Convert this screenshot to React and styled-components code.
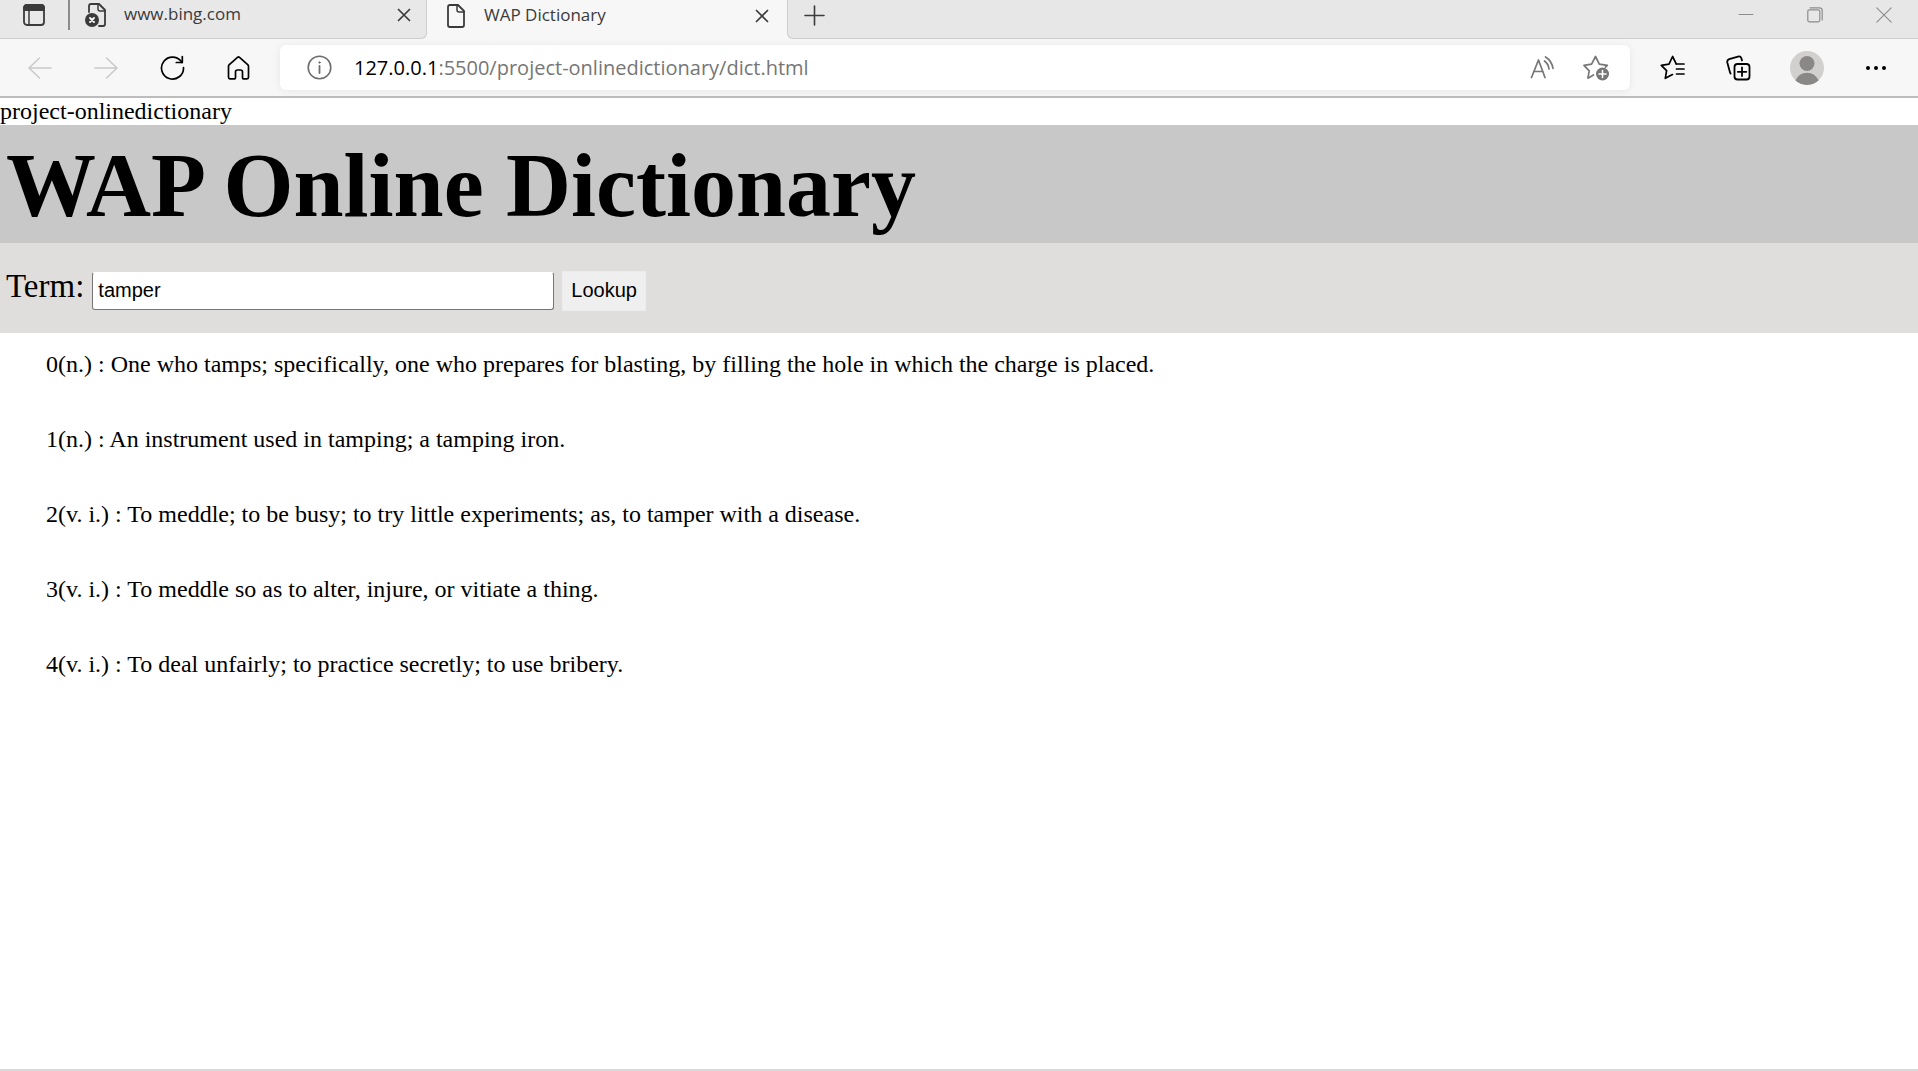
import React, { useState } from "react";
import styled, { createGlobalStyle } from "styled-components";

const GlobalStyle = createGlobalStyle`
  *, *::before, *::after { box-sizing: border-box; }
  body { margin: 0; background: #fff; }
`;

const uiFont = `"Open Sans", "Noto Sans", sans-serif`;
const serifFont = `"Liberation Serif", "Times New Roman", serif`;
const sansFont = `"Liberation Sans", Arial, sans-serif`;

const Window = styled.div`
  display: flex;
  flex-direction: column;
  min-height: 100vh;
  border-bottom: 2px solid #d9dad9;
`;

const TabStrip = styled.header`
  display: flex;
  height: 39px;
  background: #f7f7f7;
  font-family: ${uiFont};
`;

const StripStart = styled.div`
  display: flex;
  background: #e8e8e8;
  border: solid #cecece;
  border-width: 0 1px 1px 0;
  border-radius: 0 0 6px 0;
  padding-bottom: 8px;
`;

const StripEnd = styled.div`
  display: flex;
  flex: 1;
  justify-content: space-between;
  background: #e7e7e7;
  border: solid #cecece;
  border-width: 0 0 1px 1px;
  border-radius: 0 0 0 6px;
  padding-bottom: 8px;
`;

const PlainButton = styled.button`
  display: flex;
  align-items: center;
  justify-content: center;
  flex: none;
  border: 0;
  padding: 0;
  background: none;
  color: ${(p) => p.$color || "#000"};
  width: ${(p) => p.$width}px;
  svg { display: block; }
`;

const Divider = styled.span`
  width: 2px;
  background: #8c8c8c;
`;

const Tab = styled.div`
  display: flex;
  align-items: center;
  width: 356px;
  padding: 0 10px 0 15px;
  color: #3b3b3b;
  svg { display: block; flex: none; }
`;

const ActiveTab = styled(Tab)`
  width: 360px;
  padding: 0 13px 8px 18px;
`;

const TabTitle = styled.span`
  flex: 1;
  padding: 0 0 2px 18px;
  font-size: 17px;
  line-height: 24px;
  white-space: nowrap;
`;

const Controls = styled.div`
  display: flex;
`;

const Toolbar = styled.nav`
  display: flex;
  height: 59px;
  padding: 0 9px 0 7px;
  background: #f7f7f7;
  border-bottom: 2px solid #bdbdbd;
`;

const AddressBar = styled.div`
  display: flex;
  flex: 1;
  align-items: stretch;
  height: 45px;
  margin: 6px 9px;
  padding: 0 7px 0 4px;
  background: #fff;
  border-radius: 6px;
  box-shadow: 0 1px 8px rgba(0, 0, 0, 0.07);
  font-family: ${uiFont};
`;

const Address = styled.div`
  flex: 1;
  font-size: 20px;
  line-height: 45px;
  color: #767676;
  white-space: nowrap;
`;

const Host = styled.span`
  color: #000;
`;

const Page = styled.main`
  flex: 1;
  font-family: ${serifFont};
  font-size: 24px;
  line-height: 27px;
  color: #000;
`;

const Title = styled.h1`
  margin: 0;
  padding: 9px 6px 5px;
  background: #c8c8c8;
  font-size: 90px;
  line-height: 104px;
`;

const SearchForm = styled.form`
  display: flex;
  align-items: baseline;
  gap: 8px;
  padding: 24px 6px 22px;
  background: #dfdedc;
`;

const Label = styled.label`
  font-size: 33px;
  line-height: 38px;
`;

const TermInput = styled.input`
  width: 462px;
  height: 38px;
  border: 1px solid #767676;
  border-top-color: #fff;
  border-radius: 3px;
  padding: 0 5px;
  background: #fff;
  color: #000;
  font: 20px ${sansFont};
  outline: 0;
`;

const LookupButton = styled.button`
  height: 40px;
  border: 1px solid #ececec;
  padding: 0 8px;
  background: #efefef;
  color: #000;
  font: 20px ${sansFont};
`;

const Definitions = styled.div`
  display: flex;
  flex-direction: column;
  gap: 48px;
  padding: 18px 46px;
`;

const Definition = styled.p`
  margin: 0;
`;

const Icon = ({ w, h, sw = 2, children }) => (
  <svg
    width={w}
    height={h}
    viewBox={`0 0 ${w} ${h}`}
    fill="none"
    stroke="currentColor"
    strokeWidth={sw}
    strokeLinecap="round"
    strokeLinejoin="round"
    aria-hidden="true"
  >
    {children}
  </svg>
);

const TabActionsIcon = () => (
  <Icon w={22} h={22} sw={1.8}>
    <rect x="1" y="1" width="20" height="20" rx="3" />
    <path d="M1 6V4q0-3 3-3h14q3 0 3 3v2z" fill="currentColor" />
    <path d="M6 7v14" strokeWidth="1.5" />
  </Icon>
);

const BrokenPageIcon = () => (
  <Icon w={21} h={24} sw={1.8}>
    <path d="M4 9V3q0-2 2-2h8l6 6v14q0 2-2 2h-4" />
    <path d="M13 1v5q0 2 2 2h5" strokeWidth="1.5" />
    <circle cx="7" cy="17" r="7" fill="currentColor" stroke="none" />
    <path d="M5 15l4 4M9 15l-4 4" stroke="#fff" strokeWidth="1.8" />
  </Icon>
);

const PageIcon = () => (
  <Icon w={21} h={24} sw={1.8}>
    <path d="M13 1H5Q3 1 3 3v18q0 2 2 2h12q2 0 2-2V7z" />
    <path d="M12 1v5q0 2 2 2h5" strokeWidth="1.5" />
  </Icon>
);

const CloseIcon = () => (
  <Icon w={14} h={14} sw={1.7}>
    <path d="M1.5 1.5l11 11M12.5 1.5l-11 11" />
  </Icon>
);

const PlusIcon = () => (
  <Icon w={21} h={21} sw={1.6}>
    <path d="M10.5 1v19M1 10.5h19" />
  </Icon>
);

const MinimizeIcon = () => (
  <Icon w={16} h={16} sw={1}>
    <path d="M1 7.5h14" />
  </Icon>
);

const RestoreIcon = () => (
  <Icon w={16} h={16} sw={1.2}>
    <rect x="0.8" y="2.8" width="12" height="12" rx="1.5" />
    <path d="M3 0.8h9.500q2.700 0 2.700 2.700V13" />
  </Icon>
);

const WindowCloseIcon = () => (
  <Icon w={16} h={16} sw={1.1}>
    <path d="M0.8 0.8l14.400 14.400M15.200 0.8L0.8 15.200" />
  </Icon>
);

const BackIcon = () => (
  <Icon w={24} h={24} sw={1.6}>
    <path d="M23 12H1M11.5 2L1 12l10.500 10" />
  </Icon>
);

const ForwardIcon = () => (
  <Icon w={24} h={24} sw={1.6}>
    <path d="M1 12h22M12.500 2L23 12 12.500 22" />
  </Icon>
);

const ReloadIcon = () => (
  <Icon w={25} h={25} sw={1.7}>
    <path d="M22 7.500A11 11 0 1 0 23.500 12.500" />
    <path d="M22.300 1.500v6h-6" />
  </Icon>
);

const HomeIcon = () => (
  <Icon w={23} h={24} sw={1.7}>
    <path d="M1.500 10.300q0-1 .8-1.700L10.500 1.400q1-.8 2 0l8.200 7.200q.8.700.8 1.700V21.300q0 1.500-1.500 1.500h-3.500q-1 0-1-1V16q0-2-2-2h-3q-2 0-2 2v5.800q0 1-1 1H3q-1.500 0-1.500-1.500z" />
  </Icon>
);

const InfoIcon = () => (
  <Icon w={25} h={25} sw={1.6}>
    <circle cx="12.500" cy="12.500" r="11.300" />
    <path d="M12.500 11v7" strokeWidth="1.800" />
    <circle cx="12.500" cy="7.500" r="0.700" fill="currentColor" strokeWidth="1" />
  </Icon>
);

const ReadAloudIcon = () => (
  <Icon w={24} h={24} sw={1.7}>
    <path d="M1.500 21.500L8.500 4l6.500 17.500M3.800 15.500h9.200" />
    <path d="M14.500 5q4 3 4.500 8" />
    <path d="M15.500 1q6.500 4 7.500 11.500" />
  </Icon>
);

const AddFavoriteIcon = () => (
  <Icon w={26} h={26} sw={1.7}>
    <path d="M10.500 20l-5.600 3.200 1.300-7.400L1 10.300l7.600-1.200L12.500 1.500l3.800 7.600 8 1.200-1.800 1.900" />
    <circle cx="19.500" cy="19" r="6.500" fill="currentColor" stroke="none" />
    <path d="M19.500 15.500v7M16 19h7" stroke="#fff" strokeWidth="1.600" />
  </Icon>
);

const FavoritesIcon = () => (
  <Icon w={25} h={25} sw={1.7}>
    <path d="M12.500 19.600l-7.200 3.700 1.300-7.600L1.300 10.300l7.700-1.200 3.600-7.600 3.600 7.300" />
    <path d="M16.500 9h7.500M16.500 14h7.500M16.500 19h7.500" />
  </Icon>
);

const CollectionsIcon = () => (
  <Icon w={25} h={26} sw={1.8}>
    <path d="M4.600 18.500Q4.100 18 3.900 17L1.300 7.500Q.8 5 3.200 4.200L12 1.600q2.500-.7 3.400 1.700l.6 2.200" />
    <rect x="8.500" y="9" width="15" height="15.500" rx="3" />
    <path d="M16 12.500v8.500M11.800 16.800h8.500" />
  </Icon>
);

const AvatarIcon = () => (
  <svg width="34" height="34" viewBox="0 0 34 34" aria-hidden="true">
    <defs>
      <clipPath id="avatar-clip">
        <circle cx="17" cy="17" r="17" />
      </clipPath>
    </defs>
    <circle cx="17" cy="17" r="17" fill="#d2d0ce" />
    <g clipPath="url(#avatar-clip)" fill="#8a8886">
      <circle cx="17" cy="12.500" r="7.500" />
      <path d="M5 30Q9 21.800 17 21.800T29 30Q24 34 17 34T5 30z" />
    </g>
  </svg>
);

const MoreIcon = () => (
  <svg width="20" height="4" viewBox="0 0 20 4" fill="currentColor" aria-hidden="true">
    <circle cx="2" cy="2" r="2" />
    <circle cx="10" cy="2" r="2" />
    <circle cx="18" cy="2" r="2" />
  </svg>
);

const definitions = [
  ["n.", "One who tamps; specifically, one who prepares for blasting, by filling the hole in which the charge is placed."],
  ["n.", "An instrument used in tamping; a tamping iron."],
  ["v. i.", "To meddle; to be busy; to try little experiments; as, to tamper with a disease."],
  ["v. i.", "To meddle so as to alter, injure, or vitiate a thing."],
  ["v. i.", "To deal unfairly; to practice secretly; to use bribery."],
];

const IconButton = ({ label, width = 66, color, children }) => (
  <PlainButton type="button" aria-label={label} $width={width} $color={color}>
    {children}
  </PlainButton>
);

export default function App() {
  const [term, setTerm] = useState("tamper");

  return (
    <Window>
      <GlobalStyle />
      <TabStrip>
        <StripStart>
          <IconButton label="Tab actions" width={68} color="#3b3b3b"><TabActionsIcon /></IconButton>
          <Divider />
          <Tab>
            <BrokenPageIcon />
            <TabTitle>www.bing.com</TabTitle>
            <IconButton label="Close tab" width={24} color="#3b3b3b"><CloseIcon /></IconButton>
          </Tab>
        </StripStart>
        <ActiveTab>
          <PageIcon />
          <TabTitle>WAP Dictionary</TabTitle>
          <IconButton label="Close tab" width={24} color="#3b3b3b"><CloseIcon /></IconButton>
        </ActiveTab>
        <StripEnd>
          <IconButton label="New tab" width={52} color="#3b3b3b"><PlusIcon /></IconButton>
          <Controls>
            <IconButton label="Minimize" width={69} color="#8c8c8c"><MinimizeIcon /></IconButton>
            <IconButton label="Restore" width={69} color="#8c8c8c"><RestoreIcon /></IconButton>
            <IconButton label="Close window" width={69} color="#8c8c8c"><WindowCloseIcon /></IconButton>
          </Controls>
        </StripEnd>
      </TabStrip>

      <Toolbar>
        <IconButton label="Back" color="#cacaca"><BackIcon /></IconButton>
        <IconButton label="Forward" color="#cacaca"><ForwardIcon /></IconButton>
        <IconButton label="Refresh"><ReloadIcon /></IconButton>
        <IconButton label="Home"><HomeIcon /></IconButton>
        <AddressBar>
          <IconButton label="View site information" width={70} color="#6e6e6e"><InfoIcon /></IconButton>
          <Address role="textbox" aria-label="Address" tabIndex={0}>
            <Host>127.0.0.1</Host>:5500/project-onlinedictionary/dict.html
          </Address>
          <IconButton label="Read aloud" width={54} color="#767676"><ReadAloudIcon /></IconButton>
          <IconButton label="Add to favorites" width={54} color="#767676"><AddFavoriteIcon /></IconButton>
        </AddressBar>
        <IconButton label="Favorites"><FavoritesIcon /></IconButton>
        <IconButton label="Collections"><CollectionsIcon /></IconButton>
        <IconButton label="Profile" width={72}><AvatarIcon /></IconButton>
        <IconButton label="Settings and more"><MoreIcon /></IconButton>
      </Toolbar>

      <Page>
        <div>project-onlinedictionary</div>
        <Title>WAP Online Dictionary</Title>
        <SearchForm onSubmit={(e) => e.preventDefault()}>
          <Label htmlFor="term">Term:</Label>
          <TermInput id="term" type="text" value={term} onChange={(e) => setTerm(e.target.value)} />
          <LookupButton type="submit">Lookup</LookupButton>
        </SearchForm>
        <Definitions>
          {definitions.map(([part, text], i) => (
            <Definition key={i}>{`${i}(${part}) : ${text}`}</Definition>
          ))}
        </Definitions>
      </Page>
    </Window>
  );
}
